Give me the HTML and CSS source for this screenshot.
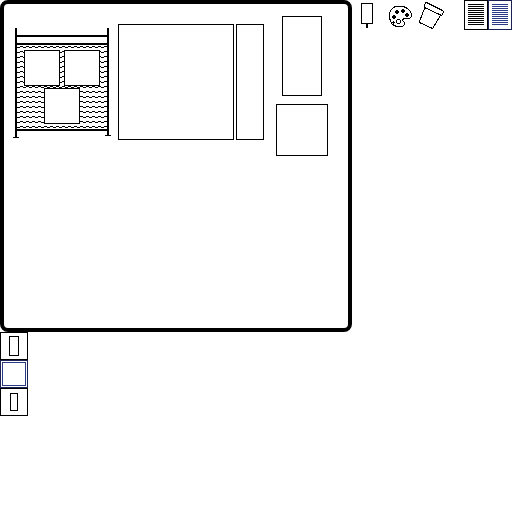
FILE: index.html
```html
<!DOCTYPE html>
<html lang="en">
<head>
<meta charset="utf-8">
<meta name="viewport" content="width=device-width, initial-scale=1">
<title>Canvas</title>
<link rel="stylesheet" href="styles.css">
</head>
<body>
<div class="app">
  <main class="board" aria-label="Canvas">
    <svg class="drawing" viewBox="0 0 344 324" shape-rendering="crispEdges" aria-hidden="true">
      <defs>
        <pattern id="waves" x="17" y="45" width="6" height="5" patternUnits="userSpaceOnUse">
          <path d="M3 1h3v1h-3zM0 2h3v1h-3z"/>
        </pattern>
      </defs>
      <g transform="translate(-4 -4)">
        <path fill="url(#waves)" d="M17 45h90v84H17z"/>
        <path d="M15 28h2v109h2v1h-6v-1h2zM107 28h2v107h2v1h-6v-1h2zM17 35h90v2H17zM17 43h90v2H17zM17 129h90v2H17z"/>
        <g fill="#fff" stroke="#000">
          <path d="M24.500 50.500h35v35h-35zM64.500 50.500h35v35h-35zM44.500 88.500h35v35h-35z"/>
          <path d="M118.500 24.500h115v115h-115zM236.500 24.500h27v115h-27zM282.500 16.500h39v79h-39zM276.500 104.500h51v51h-51z"/>
        </g>
      </g>
    </svg>
  </main>
  <div class="toolbar" role="toolbar" aria-label="Tools">
    <button class="tool" aria-label="Brush"><svg width="32" height="30" shape-rendering="crispEdges"><path fill="none" stroke="#000" d="M9.500 3.500h11v20h-11z"/><path d="M14 24h2v4h-2z"/></svg></button>
    <button class="tool" aria-label="Palette"><svg width="32" height="30" shape-rendering="crispEdges"><path fill="none" stroke="#000" d="M11.500 6.500h8l4 2 3 3 1 3v2l-2 2h-5l-2 1v1l2 2v2l-2 2h-6l-4-2-2-3-1-4v-4l1-3 3-3z"/><path d="M12 10h2v1h1v2h-1v1h-2v-1h-1v-2h1zM18 9h2v1h1v2h-1v1h-2v-1h-1v-2h1zM22 13h2v1h1v2h-1v1h-2v-1h-1v-2h1zM9 15h2v1h1v2h-1v1h-2v-1h-1v-2h1zM9 21h1v1h1v1h-1v1h-1v-1h-1v-1h1z"/><path fill="none" stroke="#000" d="M13.500 19.500h2l1 1v2l-1 1h-2l-1-1v-2z"/></svg></button>
    <button class="tool" aria-label="Fill"><svg width="32" height="30" shape-rendering="crispEdges"><path fill="none" stroke="#000" d="M10.500 2.500l16 8 1 1-1 3-1 1-2-1-15-7v-2l1-3zM8.500 8.500l-5 13v1l13 6 8-13"/></svg></button>
    <div class="pages">
      <button class="page" aria-label="Black ink"><span class="lines"></span></button>
      <button class="page selected" aria-label="Blue ink"><span class="lines"></span></button>
    </div>
  </div>
  <div class="sizes" role="toolbar" aria-label="Shapes">
    <button class="size" aria-label="Large strip"><span class="shape large"></span></button>
    <button class="size selected" aria-label="Square"><span class="shape square"></span></button>
    <button class="size" aria-label="Small strip"><span class="shape small"></span></button>
  </div>
</div>
</body>
</html>
```
FILE: styles.css
```css
* { box-sizing: border-box; }
body { margin: 0; background: #fff; }
button { margin: 0; padding: 0; background: #fff; border: 0; color: #000; }
.app {
  display: grid;
  grid-template-columns: minmax(0, 1fr) 160px;
  align-items: start;
}
.board { border: 4px solid #000; border-radius: 8px; }
.drawing { display: block; width: 100%; height: auto; }
.toolbar { display: flex; align-items: flex-start; }
.tool svg { display: block; }
.pages { display: flex; margin-left: auto; }
.page {
  display: flex;
  width: 24px;
  padding: 3px;
  border: 1px solid #000;
}
.selected { border-color: #1b2152; color: #2d3a86; }
.lines {
  flex: 1;
  height: 22px;
  background: repeating-linear-gradient(currentColor 0 1px, #fff 1px 2px);
}
.sizes { grid-column: 1; display: flex; flex-direction: column; align-items: flex-start; }
.size {
  display: flex;
  align-items: center;
  justify-content: center;
  width: 28px;
  height: 28px;
  border: 1px solid #000;
}
.size.selected { border-color: #1b2152; }
.shape { border: 1px solid currentColor; }
.large { width: 10px; height: 20px; }
.square { width: 24px; height: 24px; }
.small { width: 8px; height: 18px; }
```
